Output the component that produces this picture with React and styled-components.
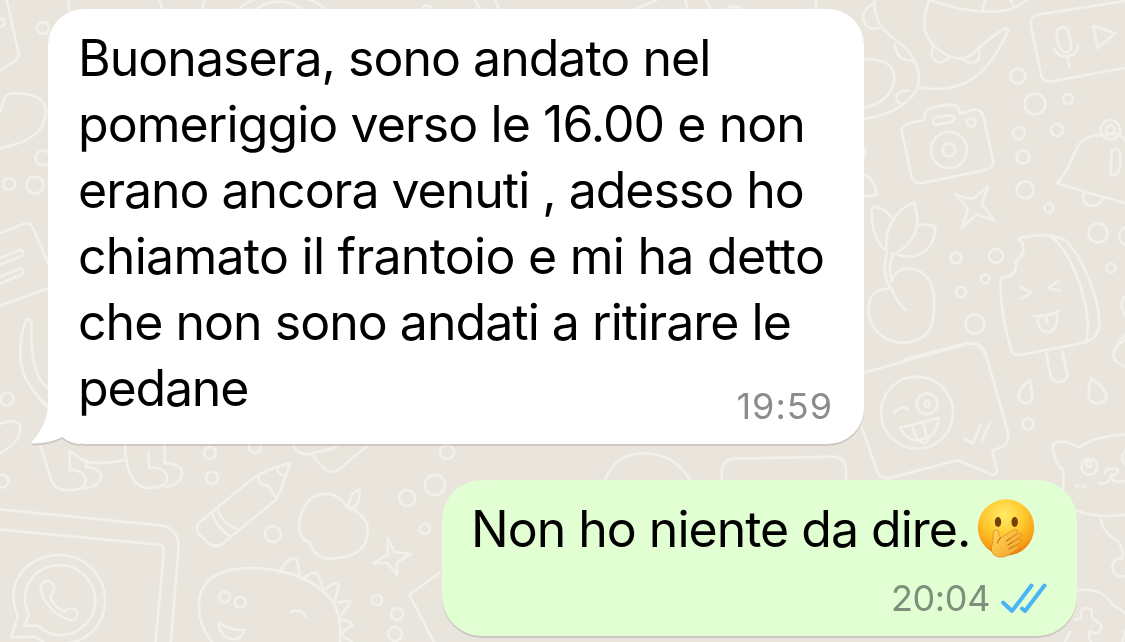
import styled, { createGlobalStyle } from 'styled-components';

const GlobalStyle = createGlobalStyle`
    body {
        margin: 0;
        overflow: hidden;
        font-family: Inter, "Liberation Sans", sans-serif;
    }
`;

const Screen = styled.main`
    position: relative;
    display: flex;
    flex-direction: column;
    gap: 36px;
    box-sizing: border-box;
    width: 1125px;
    height: 642px;
    padding: 9px 48px 0;
    overflow: hidden;
    background: #e9e5dd;
`;

const Doodles = styled.svg`
    position: absolute;
    inset: 0;
    fill: none;
    stroke: #f3f0e9;
    stroke-width: 8;
    stroke-linecap: round;
    stroke-linejoin: round;
`;

const Bubble = styled.article`
    position: relative;
    display: flex;
    flex-direction: column;
    flex-shrink: 0;
    box-sizing: border-box;
    align-self: ${({ $mine }) => ($mine ? 'flex-end' : 'flex-start')};
    width: ${({ $mine }) => ($mine ? 635 : 816)}px;
    height: ${({ $mine }) => ($mine ? 156 : 435)}px;
    padding: ${({ $mine }) => ($mine ? '16px 30px 0 29px' : '16px 32px 0 30px')};
    border-radius: ${({ $mine }) => ($mine ? '40px' : '36px')};
    background: ${({ $mine }) => ($mine ? '#e2ffd4' : '#ffffff')};
    filter: drop-shadow(0 2.5px 0.5px rgba(0, 0, 0, 0.12));
`;

const Tail = styled.svg`
    position: absolute;
    left: -18px;
    bottom: 0;
    fill: #ffffff;
`;

const Line = styled.div`
    display: flex;
    align-items: center;
    height: 66px;
    font-size: 50px;
    line-height: 66px;
    letter-spacing: ${({ $tracking }) => $tracking}px;
    color: #000000;
    white-space: pre;
`;

const Meta = styled.footer`
    display: flex;
    align-items: center;
    align-self: flex-end;
    gap: 11px;
    height: 40px;
    margin-top: ${({ $mine }) => ($mine ? '16px' : '-35px')};
    margin-right: ${({ $mine }) => ($mine ? '0' : '-1px')};
    font-size: 36px;
    line-height: 40px;
    letter-spacing: ${({ $tracking }) => $tracking}px;
    color: ${({ $mine }) => ($mine ? '#7f8f7b' : '#8b8b90')};
`;

const Emoji = styled.svg`
    flex-shrink: 0;
    margin-left: 7px;
    margin-top: -1px;
`;

const lines = [
    { text: 'Buonasera, sono andato nel', tracking: -0.98 },
    { text: 'pomeriggio verso le 16.00 e non', tracking: -0.93 },
    { text: 'erano ancora venuti , adesso ho', tracking: -1.02 },
    { text: 'chiamato il frantoio e mi ha detto', tracking: -0.73 },
    { text: 'che non sono andati a ritirare le', tracking: -0.97 },
    { text: 'pedane', tracking: -1.15 },
];

const circles = [
    [43, 28, 6], [43, 158, 7.5], [9, 184, 6], [35, 185, 8.5], [7, 399, 6.5], [2, 481, 6.5],
    [210, 453, 6], [212, 478, 6], [255, 447, 6], [273, 534, 8], [447, 452, 7], [435, 485, 10],
    [407, 498, 8], [425, 529, 5], [377, 600, 5], [397, 614, 6], [395, 634, 7],
    [1018, 76, 7.5], [1035, 104, 10.5], [1068, 99, 5], [1019, 133, 6], [1057, 130, 6],
    [1023, 157, 6.5], [1025, 190, 8.5], [1049, 208, 4.5], [956, 258, 5.5], [996, 256, 7],
    [985, 279, 4.5], [961, 292, 5], [975, 324, 9.5], [1098, 233, 9.5], [1128, 236, 9],
    [1111, 268, 4.5], [1028, 424, 5.5],
];

const Wallpaper = () => (
    <Doodles width="1125" height="642" viewBox="0 0 1125 642">
        <g strokeWidth="2.6">
            {circles.map(([x, y, r]) => (
                <circle key={`${x}-${y}`} cx={x} cy={y} r={r} />
            ))}
        </g>
        {/* top edge */}
        <g transform="scale(.33333)">
            <path d="M207 0v30M478 0l10 30M613 0l-6 30M715 30q40-45 120-38q90-12 145 38M765 30q70-50 145 0M1268 22q12-12 25 0M1425 0l15 27M1485 0l12 27M1905 28l80-35M2057 0l5 28M2118 0l16 28M2180 28q20-20 45 0M2447 0v28" />
        </g>
        {/* left edge */}
        <g transform="scale(.33333)">
            <path d="M20 0l36 160q2 12-8 20L0 212M-5 60l17-5v20l-17 8M0 335l12-37q6-18 28-18q90 0 97 45q4 75-82 105L0 446" />
            <path d="M0 700l70-28q22-6 30 14l45 105M0 917l145-53M0 774l58-24q16-2 9 17L0 794M0 830l58-24q16-2 9 17L0 851M145 1165q-58-40-50-200q-10-16-20 2q-28 90-2 160q28 55 70 90" />
            <path d="M145 1225q-38-35-68-90M0 1272q45-20 60 5q8 45-60 83" />
        </g>
        {/* legs, laptop, phone bubble */}
        <g transform="translate(0 380) scale(.33333)">
            <path d="M122 200l30 95q10 30 35 34q30 5 60-5q20-20 2-42q-18-14-40-12v-57l45 32q50 10 120-5M258 240v22q42 0 46 29q-10 35-58 33M375 190q0 70 25 110q22 25 50 24q60-2 50-40q-14-25-52-20l-3-50M494 190v60q48 0 53 28q-7 37-50 42" />
            <path d="M0 388l480 48q55 8 56 64l-24 286M0 449l470 44q23 0 21 23l-24 270" />
            <path d="M54 707C8 608 84 525 178 525C257 525 315 590 315 660C315 744 250 790 190 790M54 707l-21 65l70-2l40 25" />
            <path d="M87 707C48 615 114 555 180 555C238 555 286 605 286 662C286 720 235 766 180 766C152 766 130 753 112 736l-40 1z" />
            <path d="M122 632q-4-28 25-30q23 17 12 35q-13 10-4 24q15 25 38 34q28-22 40 3q-3 26-22 22Q146 702 122 632z" />
        </g>
        {/* pencil, apple, star, dinosaur */}
        <g transform="translate(180 430) scale(.33333)">
            <path d="M0 150q12-20 0-38M55 280L225 140q55-30 105-40q-15 50-40 107L132 338q-24 20-48 0l-27-26q-12-16-2-32zM96 250q15 48 58 70M112 235q15 46 60 62M234 137q5 36 31 30l22 34M292 119q2 15 22 17" />
            <path d="M340 45q8 25 38 28l92-20M395 74l40 44q20 16 45-2l78-66" />
            <path d="M500 230q-38-58-100-30q-40 30-43 90q3 42 31 46q20 55 70 50q120-8 103-105q-20-38-61-51zM505 228q5-40 32-50q8 40-24 62" />
            <path d="M623 325l20 41l50 6l-42 25v38l-28-36l-42 1l43-27z" />
            <path d="M96 636C45 575 45 485 90 447C160 394 315 410 400 462C472 505 486 560 480 636M297 428q30-55 54-38l10 55M373 442q33-24 42-5l15 38M438 476q30-26 38-9l-12 48M474 518q26-8 38-2l-27 38M484 569q28 4 34 15l-34 26M484 615l30 20" />
            <circle cx="134" cy="501" r="16" />
            <circle cx="181" cy="517" r="16" />
            <path d="M333 545q34-10 44 16M115 579q35 22 79 22q-16 40-53 22q-25-16-26-44zM780 428l-92 66l75 145" />
        </g>
        {/* crocodile, message card, camera, bell */}
        <g transform="translate(860 0) scale(.33333)">
            <path d="M43 0C42 92 95 102 144 152C225 258 145 335 12 357M12 177c72 2 89 20 91 60c-7 55-49 77-91 86M207 0C180 80 195 118 237 150C302 198 334 170 358 142Q450 64 444 93C384 230 305 285 174 262M207 0C320 38 440 55 500 0M370 27q0-38 40-42q45 2 50 35" />
            <path d="M40 10q-35 20-30 50q10 35 54 22M105 134q2 48 54 48M109 298q0-30 38-26M109 298q10 18 27 10M220 140q-16 40 24 48l28-17M356 148q10 45-30 40l-16-10" />
            <path d="M795 3L540 43q-33 4-27 36l30 145q4 23 32 20L795 204M589 95q17-25 35-5l10 50q-4 24-27 13q-14-12-18-58zM582 145q19 37 54 19q20-9 18-29M623 173l6 30M700 78l66 22l-53 44z" />
            <path d="M155 530l-31-140q4-20 70-30v-18q4-19 38-22q55-14 64 4l4 18l37-12q26-5 34 20l29 135q0 21-29 26l-184 38q-24 4-32-19zM221 370q-8-16 15-20l38-4q16 6 4 19l-39 8q-14 4-18-3z" />
            <circle cx="267" cy="450" r="54" /><circle cx="267" cy="450" r="19" /><circle cx="334" cy="367" r="13" />
            <path d="M285 581q31 17 57 14l43-36l-20 54l39 49l-53-19l-45 39l18-55z" />
            <path d="M795 610L590 550C655 480 632 428 696 408l70-7q23 8 29 20M670 580q-2 40 32 38q18-2 26-20M754 455q8-15 25-2q7 60-11 71q-22 4-15-18z" />
            <circle cx="751" cy="389" r="29" /><circle cx="751" cy="389" r="13" />
            <path d="M12 445q8 15 0 26M12 522q38 24 37 63l-37 4" />
        </g>
        {/* radish and ice lolly */}
        <g transform="translate(860 190) scale(.33333)">
            <path d="M80 184q-52-44-43-134q32 1 57 30M80 184c-8-70 24-122 82-148c18 60 16 109-50 152M173 106q36-6 53 5c-2 76-62 102-118 81M80 190q-14 58 8 98M100 190q-16 40-7 73M94 275c8-50 94-58 122 12c10 42 12 119-19 147C138 484 38 454 26 370Q20 296 88 296M92 290q18 48 45 70M135 507l185-48q44-5 61 50" />
            <path d="M475 146q85-24 142 6c50 49 107 184 100 260c-7 34-28 40-52 48l-187 35q-22 3-26-20q-35-125-30-211q56-5 44-51q35-19 20-56zM572 140C639 182 701 371 679 450M560 495l3 15M606 485l5 25M482 291l32 17l-31 18M596 272l-32 22l36 8M517 379q48 1 80-16M533 381q0 49 35 45q32-13 20-57M558 379l4 18M795 320q-20 22 0 55M795 450q-45 30-30 60" />
        </g>
        {/* smiley card, drops, cat */}
        <g transform="translate(860 330) scale(.33333)">
            <path d="M12 128L320 42q42-9 56 25l68 240q9 42-47 54l14 61q-3 15-18 11l-99-42L92 443q-28 7-40-16L5 290" />
            <circle cx="171" cy="248" r="108" /><circle cx="201" cy="221" r="31" /><circle cx="201" cy="221" r="8" />
            <path d="M103 250q20-28 40-12M120 293l116-29q-3 60-61 66q-35 2-55-37zM156 287l14 38M190 281l9 35M171 327q30 28 34-5M314 327l24 12l24-54M365 333l24-54" />
            <path d="M558 68l15 74q8 16 29 14q18-4 20-22l-14-69M510 151q-28 17-35 44q5 28 30 23q15-5 12-29zM694 145q-15 50-4 65q25 22 49-4q2-31-45-61M795 13q-52 59-26 82l26 15" />
            <path d="M610 475v-57c-21-6-39-66-27-79q30-13 73 14q50-36 139-39M795 362q-18 20 0 40M648 467l6 3M668 468l6 3M736 430q1-18 20-13q23-5 16 10q-12 18-20 5M754 438q-10 30-38 20M755 440q5 23 40 12" />
            <circle cx="688" cy="410" r="24" /><circle cx="686" cy="402" r="8" />
        </g>
        {/* lower right */}
        <g transform="translate(1030 380) scale(.33333)">
            <path d="M142 392q56 24 143 12M213 418q6 42 52 66q15 20 12 52q-35-2-29 34q12 26 37 18M140 631q75-10 105 40l40 28M135 718q25 5 17-25q8-15 33-4q-1 30 11 32q17 10 19 20q-11 31-34 12q-10 10 2 33M105 786l15-30M285 750l-8 36" />
        </g>
        <g transform="translate(700 370) scale(.33333)">
            <path d="M65 335v-30q3-36 36-39l300-6q34 3 37 35v40" />
        </g>
        <path strokeWidth="2.6" d="M605 480q10-27 40-27q31 2 45 27" />
    </Doodles>
);

const HandOverMouth = () => (
    <Emoji width="58" height="60" viewBox="0 0 58 60" role="img" aria-label="🤭">
        <defs>
            <radialGradient id="face" cx="46%" cy="28%" r="72%">
                <stop offset="0" stopColor="#ffeb68" />
                <stop offset=".5" stopColor="#ffc92f" />
                <stop offset=".85" stopColor="#f9a016" />
                <stop offset="1" stopColor="#e97b09" />
            </radialGradient>
            <linearGradient id="hand" x1="0" y1="0" x2="1" y2="1">
                <stop offset="0" stopColor="#ffd65a" />
                <stop offset="1" stopColor="#f5a028" />
            </linearGradient>
        </defs>
        <circle cx="29" cy="28.5" r="28.2" fill="url(#face)" />
        <ellipse cx="21" cy="23" rx="3.2" ry="5" fill="#754109" />
        <ellipse cx="37.7" cy="23" rx="3.2" ry="5" fill="#754109" />
        <path
            d="M16 35Q16 31 19 31Q22 31 22 35L23.500 39L36 31.500Q40 29.500 40.500 32Q41 33.500 38 35.500L33 39.500L42 34.500Q45.500 34 44.500 37L35.500 43L42.500 40Q46 40 44 43L35.500 48L40.500 46.500Q44 47 41 50L33 55Q28 59 22 58Q16 57 14.500 52Q14 48 15.500 44Q16.500 39 16 35Z"
            fill="url(#hand)"
            stroke="#d98318"
            strokeWidth=".7"
        />
        <path d="M33 39.500L29.500 42M35.500 43L31 46M35.500 48L32 50M23.500 39Q21 41 20.500 44" fill="none" stroke="#c8721a" strokeWidth="1.2" strokeLinecap="round" />
    </Emoji>
);

const ReadTicks = () => (
    <svg width="46" height="31" viewBox="0 0 46 31" fill="none" stroke="#4ab4f5" strokeWidth="4" strokeLinecap="round" strokeLinejoin="round">
        <path d="M2 19.5l9 8.5L30.500 2.500M21 25.500l3 2.500L43.500 2.500" />
    </svg>
);

export default function App() {
    return (
        <>
            <GlobalStyle />
            <Screen>
                <Wallpaper />
                <Bubble>
                    <Tail width="50" height="45" viewBox="0 0 50 45">
                        <path d="M18 0V10Q15 29 1.500 43Q.5 44.500 3 44.500Q20 44 32.500 38Q39 44 50 45V0z" />
                    </Tail>
                    {lines.map(({ text, tracking }) => (
                        <Line key={text} $tracking={tracking}><span>{text}</span></Line>
                    ))}
                    <Meta $tracking={1}>19:59</Meta>
                </Bubble>
                <Bubble $mine>
                    <Line $tracking={-1}>
                        <span>Non ho niente da dire.</span>
                        <HandOverMouth />
                    </Line>
                    <Meta $mine $tracking={-0.4}>
                        20:04
                        <ReadTicks />
                    </Meta>
                </Bubble>
            </Screen>
        </>
    );
}
